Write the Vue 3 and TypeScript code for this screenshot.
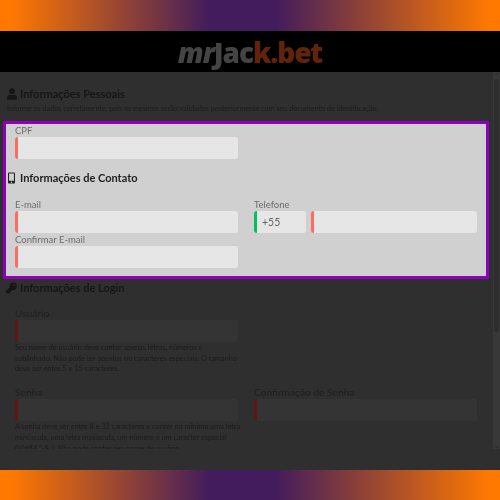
<script setup lang="ts">
const passwordHelp: string[] = [
  'A senha deve ser entre 8 e 32 caracteres e conter no mínimo uma letra',
  'minúscula, uma letra maiúscula, um número e um caracter especial',
  '(!@#$&*-$_). Não pode conter seu nome de usuário.',
]
const userHelp: string[] = [
  'Seu nome de usuário deve conter apenas letras, números e',
  'sublinhado. Não pode ter acentos ou caracteres especiais. O tamanho',
  'deve ser entre 5 e 15 caracteres.',
]
</script>

<template>
  <div class="page">
    <div class="band"></div>
    <header class="brand">
      <div class="logo"><span class="mr">mr</span><span class="jac">Jac</span><span class="bet">k.bet</span></div>
    </header>
    <div class="scroller">
      <main class="content">
        <h2 class="heading first">
          <svg class="icon" viewBox="0 0 448 512"><path fill="currentColor" d="M224 256a128 128 0 1 0 0-256 128 128 0 0 0 0 256zm90 32h-17a174 174 0 0 1-146 0h-17C60 288 0 348 0 422v42c0 27 21 48 48 48h352c27 0 48-21 48-48v-42c0-74-60-134-134-134z"/></svg>
          Informações Pessoais
        </h2>
        <p class="intro">Informe os dados corretamente, pois os mesmos serão validados posteriormente com seu documento de identificação.</p>

        <section class="spotlight">
          <div class="grid one">
            <div class="field">
              <label>CPF</label>
              <div class="input bad"></div>
            </div>
          </div>
          <h2 class="heading contact">
            <svg class="icon phone" viewBox="0 0 320 512"><path fill="currentColor" d="M272 0H48C21 0 0 21 0 48v416c0 27 21 48 48 48h224c27 0 48-21 48-48V48c0-27-21-48-48-48zM160 480a32 32 0 1 1 0-64 32 32 0 0 1 0 64zm112-108c0 7-5 12-12 12H60c-7 0-12-5-12-12V60c0-7 5-12 12-12h200c7 0 12 5 12 12v312z"/></svg>
            Informações de Contato
          </h2>
          <div class="grid">
            <div class="stack">
              <div class="field">
                <label>E-mail</label>
                <div class="input bad"></div>
              </div>
              <div class="field">
                <label>Confirmar E-mail</label>
                <div class="input bad"></div>
              </div>
            </div>
            <div class="field">
              <label>Telefone</label>
              <div class="phone-row">
                <div class="input ddi">+55</div>
                <div class="input bad grow"></div>
              </div>
            </div>
          </div>
        </section>

        <h2 class="heading login">
          <svg class="icon key" viewBox="0 0 512 512"><path fill="currentColor" d="M512 176a176 176 0 0 1-209 173l-24 27c-5 5-11 8-18 8h-37v40c0 13-11 24-24 24h-40v40c0 13-11 24-24 24H24c-13 0-24-11-24-24v-78c0-6 3-12 7-17l162-162A176 176 0 1 1 512 176zm-176-48a48 48 0 1 0 96 0 48 48 0 0 0-96 0z"/></svg>
          Informações de Login
        </h2>
        <div class="grid dark-grid">
          <div class="field dark">
            <label>Usuário</label>
            <div class="input dim"></div>
            <p class="help"><span v-for="line in userHelp" :key="line" class="line">{{ line }}</span></p>
          </div>
          <div></div>
          <div class="field dark">
            <label>Senha</label>
            <div class="input dim"></div>
            <p class="help"><span v-for="line in passwordHelp" :key="line" class="line">{{ line }}</span></p>
          </div>
          <div class="field dark">
            <label>Confirmação de Senha</label>
            <div class="input dim"></div>
          </div>
        </div>
      </main>
      <div class="scrollbar">
        <span class="arrow">⌃</span>
        <div class="thumb"></div>
        <span class="arrow down">⌄</span>
      </div>
    </div>
    <div class="bottom-gap"></div>
    <div class="band low"></div>
  </div>
</template>

<style>
html, body { margin: 0; background: #2f2f2f; }
</style>

<style scoped>
.page {
  width: 500px;
  height: 500px;
  display: flex;
  flex-direction: column;
  overflow: hidden;
  background: #2f2f2f;
  font-family: Lato, "Open Sans", sans-serif;
  filter: blur(0.3px);
}
.band {
  height: 31px;
  flex: none;
  background: linear-gradient(90deg, #ff7900 2%, #421c5c 42%, #421c5c 55%, #ff7900 98%);
}
.band.low { height: 30px; }
.brand {
  height: 41px;
  flex: none;
  background: #000;
  display: flex;
  align-items: center;
  justify-content: center;
}
.logo {
  font-family: "Open Sans", sans-serif;
  font-size: 28px;
  line-height: 1;
  font-weight: 800;
  letter-spacing: -1.1px;
  color: #444;
}
.mr { font-style: italic; }
.bet { color: #62230a; }
.scroller {
  flex: none;
  height: 377px;
  display: flex;
  overflow: hidden;
}
.content {
  flex: 1;
  min-width: 0;
  padding-top: 14px;
}
.bottom-gap { flex: 1; }
.heading {
  margin: 0;
  display: flex;
  align-items: center;
  gap: 3px;
  padding-left: 7px;
  font-size: 11px;
  line-height: 16px;
  font-weight: 700;
  color: #161616;
}
.icon { width: 10px; height: 12px; flex: none; }
.phone { width: 7px; margin-right: 2px; }
.key { width: 11px; margin-left: -1px; }
.intro {
  margin: 1px 0 0;
  padding-left: 7px;
  font-size: 7.2px;
  line-height: 11px;
  color: #1c1c1c;
  white-space: nowrap;
}
.spotlight {
  margin: 7px 4px 0 3px;
  height: 158px;
  box-sizing: border-box;
  border: 3px solid #8c00bc;
  background: #d0d0d0;
}
.spotlight .heading {
  color: #222;
  padding-left: 2px;
}
.contact { margin-top: 11px; margin-bottom: 12px; }
.grid {
  display: grid;
  grid-template-columns: 223px 223px;
  column-gap: 16px;
  padding-left: 9px;
}
.one { grid-template-columns: 223px; }
.stack { display: flex; flex-direction: column; }
.field label {
  display: block;
  font-size: 9.5px;
  line-height: 13px;
  color: #6d6d6d;
}
.input {
  height: 22px;
  box-sizing: border-box;
  background: #e6e6e6;
  border-radius: 3px;
  font-size: 10.5px;
  line-height: 22px;
  color: #666;
}
.bad { border-left: 3px solid #ff6b60; }
.ddi {
  width: 52px;
  flex: none;
  border-left: 3px solid #00c060;
  padding-left: 5px;
}
.phone-row { display: flex; gap: 5px; }
.grow { flex: 1; }
.login { margin-top: 1px; }
.dark-grid { margin-top: 10px; row-gap: 10px; padding-left: 15px; }
.field.dark label { color: #1f1f1f; font-size: 10.2px; line-height: 14px; }
.dim {
  background: #343434;
  border-left: 3px solid #661313;
}
.help {
  margin: 0;
  padding-top: 1px;
  font-size: 7.3px;
  line-height: 10.7px;
  color: #1c1c1c;
}
.line { display: block; white-space: nowrap; }
.scrollbar {
  width: 7px;
  flex: none;
  background: #383838;
  display: flex;
  flex-direction: column;
  align-items: center;
}
.arrow {
  height: 7px;
  font-size: 7px;
  line-height: 7px;
  color: #222;
}
.thumb {
  width: 5px;
  height: 253px;
  background: #2d2d2d;
  border-radius: 3px;
}
.down { margin-top: auto; }
</style>
